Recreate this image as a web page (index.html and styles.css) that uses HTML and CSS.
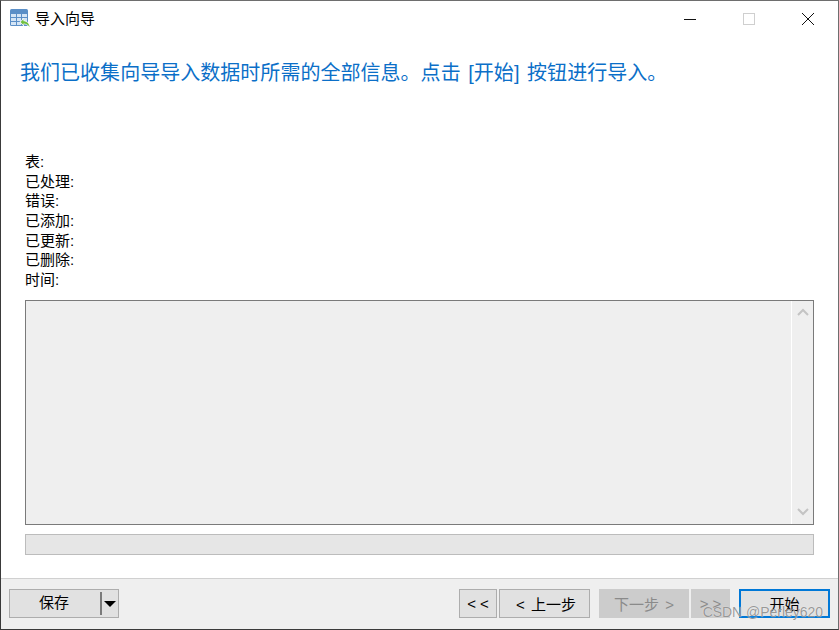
FILE: index.html
```html
<!DOCTYPE html>
<html lang="zh">
<head>
<meta charset="utf-8">
<title>导入向导</title>
<link rel="stylesheet" href="styles.css">
</head>
<body>
<div class="window">
  <header class="titlebar">
    <svg class="appicon" width="20" height="20" viewBox="0 0 20 20">
      <rect x="0" y="0" width="18" height="17" rx="1.5" fill="#5b8fc7"/>
      <rect x="1" y="5" width="5" height="3" fill="#d5e5f5"/>
      <rect x="7" y="5" width="4" height="3" fill="#d5e5f5"/>
      <rect x="12" y="5" width="5" height="3" fill="#d5e5f5"/>
      <rect x="1" y="9" width="5" height="3" fill="#d5e5f5"/>
      <rect x="7" y="9" width="4" height="3" fill="#d5e5f5"/>
      <rect x="12" y="9" width="5" height="3" fill="#d5e5f5"/>
      <rect x="1" y="13" width="5" height="3" fill="#d5e5f5"/>
      <rect x="7" y="13" width="4" height="3" fill="#d5e5f5"/>
      <path d="M9.5 13 L14 9 V11.5 C17.5 11.5 20 14.5 20 19.5 C18.5 16.5 16.5 15.2 14 15.2 V17.5 Z" fill="#ffffff"/>
      <path d="M10.5 13 L13.5 10.3 V12.2 C17 12.2 19.2 14.5 19.6 18 C18 15.8 16.2 14.5 13.5 14.5 V16 Z" fill="#6fbf3f"/>
    </svg>
    <span class="title">导入向导</span>
    <div class="controls">
      <svg class="ctl ctl-min" width="12" height="12" viewBox="0 0 12 12"><path d="M0 6.5H12" stroke="#111" stroke-width="1"/></svg>
      <svg class="ctl ctl-max" width="12" height="12" viewBox="0 0 12 12"><rect x=".5" y=".5" width="11" height="11" fill="none" stroke="#cfcfcf"/></svg>
      <svg class="ctl ctl-close" width="14" height="14" viewBox="0 0 14 14"><path d="M1 1L13 13M13 1L1 13" stroke="#111" stroke-width="1"/></svg>
    </div>
  </header>
  <main class="content">
    <h1 class="heading">我们已收集向导导入数据时所需的全部信息。点击 [开始] 按钮进行导入。</h1>
    <ul class="stats">
      <li>表:</li>
      <li>已处理:</li>
      <li>错误:</li>
      <li>已添加:</li>
      <li>已更新:</li>
      <li>已删除:</li>
      <li>时间:</li>
    </ul>
    <div class="log">
      <div class="log-body"></div>
      <div class="scrollbar">
        <svg width="12" height="8" viewBox="0 0 12 8"><path d="M1 7L6 2L11 7" fill="none" stroke="#c4c4c4" stroke-width="2"/></svg>
        <svg width="12" height="8" viewBox="0 0 12 8"><path d="M1 1L6 6L11 1" fill="none" stroke="#c4c4c4" stroke-width="2"/></svg>
      </div>
    </div>
    <div class="progress"></div>
  </main>
  <footer class="footer">
    <div class="split">
      <span class="split-label">保存</span>
      <span class="split-divider"></span>
      <span class="split-arrow"></span>
    </div>
    <div class="nav">
      <button class="btn btn-first">&lt; &lt;</button>
      <button class="btn btn-prev">&lt; 上一步</button>
      <button class="btn btn-next" disabled>下一步 &gt;</button>
      <button class="btn btn-last" disabled>&gt; &gt;</button>
      <button class="btn btn-start">开始</button>
    </div>
  </footer>
  <div class="watermark">CSDN @Perley620</div>
</div>
</body>
</html>
```
FILE: styles.css
```css
* { box-sizing: border-box; }
html, body { margin: 0; padding: 0; }
body {
  width: 839px;
  height: 630px;
  overflow: hidden;
  background: #fff;
  font-family: "Liberation Sans", "Noto Sans CJK SC", sans-serif;
  font-size: 15px;
  color: #000;
}
.window {
  position: relative;
  width: 839px;
  height: 630px;
  display: flex;
  flex-direction: column;
  background: #fff;
  border: 1px solid #6e6e6e;
  border-left-color: #3a3a3a;
  border-bottom-color: #3a3a3a;
}
.titlebar {
  flex: none;
  height: 37px;
  display: flex;
  align-items: center;
  padding-left: 9px;
}
.appicon { flex: none; margin-top: -2px; }
.title { margin-left: 5px; margin-top: -1px; line-height: 20px; }
.controls {
  margin-left: auto;
  display: flex;
  align-items: center;
  padding-right: 23px;
  margin-top: -2px;
}
.ctl-min { margin-right: 47px; }
.ctl-max { margin-right: 46px; }
.content {
  flex: 1;
  min-height: 0;
  padding: 0 24px;
  display: flex;
  flex-direction: column;
}
.heading {
  margin: 20px 0 0 -5px;
  font-size: 20px;
  line-height: 30px;
  font-weight: 400;
  word-spacing: 2px;
  letter-spacing: 0.03px;
  color: #0b6fc8;
  white-space: nowrap;
}
.stats {
  list-style: none;
  margin: 0;
  padding: 0;
  margin-top: 64px;
  line-height: 19.67px;
}
.log {
  flex: none;
  margin-top: 10px;
  height: 225px;
  display: flex;
  background: #efefef;
  border: 1px solid #7a7a7a;
}
.log-body { flex: 1; }
.scrollbar {
  flex: none;
  width: 22px;
  border-left: 1px solid #fff;
  display: flex;
  flex-direction: column;
  justify-content: space-between;
  align-items: center;
  padding: 7px 0 8px;
}
.progress {
  flex: none;
  margin-top: 9px;
  height: 21px;
  background: #e6e6e6;
  border: 1px solid #bcbcbc;
}
.footer {
  flex: none;
  height: 51px;
  background: #efefef;
  border-top: 1px solid #d0d0d0;
  display: flex;
  justify-content: space-between;
  align-items: flex-start;
  padding: 10px 8px 0;
}
.split {
  width: 110px;
  height: 29px;
  display: flex;
  align-items: center;
  background: #e1e1e1;
  border: 1px solid #adadad;
}
.split-label { width: 90px; text-align: center; margin-left: -1px; margin-right: 1px; line-height: 20px; margin-top: -1px; }
.split-divider { width: 2px; height: 23px; background: #7a7a7a; }
.split-arrow {
  margin-left: 2px;
  width: 0;
  height: 0;
  border-left: 6px solid transparent;
  border-right: 6px solid transparent;
  border-top: 6px solid #000;
}
.nav { display: flex; }
.btn {
  height: 29px;
  padding: 0 0 1px;
  font: inherit;
  word-spacing: 2px;
  color: #000;
  background: #e1e1e1;
  border: 1px solid #adadad;
  border-radius: 0;
}
.btn-first { width: 38px; margin-right: 2px; word-spacing: 0; }
.btn-prev { width: 91px; margin-right: 9px; padding-left: 3px; }
.btn-next { width: 90px; margin-right: 2px; }
.btn-last { width: 39px; margin-right: 9px; word-spacing: 0; }
.btn-start { width: 91px; border: 2px solid #0078d7; }
.btn:disabled { background: #cccccc; border-color: #cccccc; color: #8a8a8a; }
.watermark {
  position: absolute;
  right: 15px;
  bottom: 9px;
  font-size: 14px;
  letter-spacing: -0.03px;
  line-height: 16px;
  color: rgba(110, 110, 110, 0.7);
  text-shadow: 0 0 1px rgba(255, 255, 255, 0.9);
}
```
